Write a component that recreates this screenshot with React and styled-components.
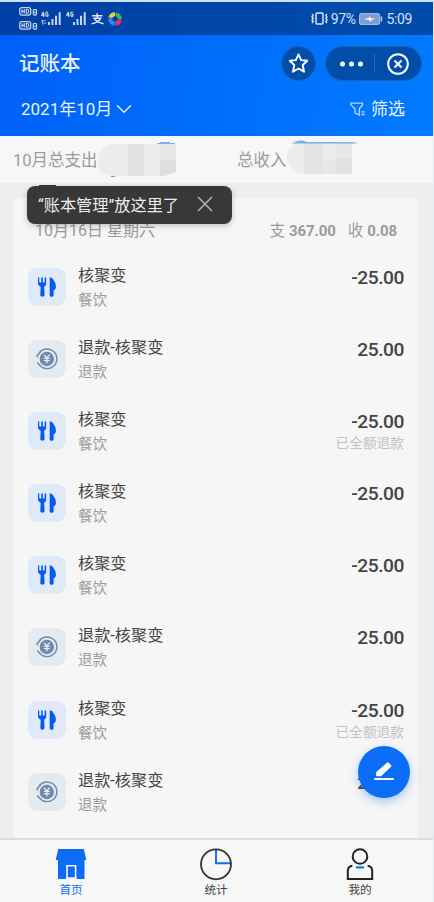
import styled, { createGlobalStyle } from 'styled-components'

const theme = {
  blue: '#0b6df5',
  ink: '#444444',
  grey: '#9b9b9b',
  panel: '#f6f6f6',
}

const GlobalStyle = createGlobalStyle`
  * {
    box-sizing: border-box;
  }
  body {
    margin: 0;
    font-family: Roboto, "Noto Sans CJK SC", sans-serif;
    background: ${theme.panel};
  }
  svg {
    display: block;
    flex: none;
  }
`

const Screen = styled.div`
  position: relative;
  display: flex;
  flex-direction: column;
  width: 434px;
  height: 902px;
  overflow: hidden;
  border-top: 2px solid #c9e5f2;
  border-right: 1px solid #e3eaf0;
  background: ${theme.panel};
`

const StatusBar = styled.div`
  display: flex;
  justify-content: space-between;
  flex: none;
  height: 33px;
  padding: 0 17px 0 19px;
  background: linear-gradient(90deg, #003fa6, #004cab);
`

const StatusGroup = styled.div`
  display: flex;
  align-items: center;
  color: #d5e3f7;
`

const StatusIcons = styled.div`
  display: flex;
  align-items: center;
  gap: 4px;
  margin-left: 3px;
`

const StatusText = styled.span`
  font-size: 14px;
  line-height: 20px;
  letter-spacing: -0.4px;
  margin: 0 ${props => props.$gap || '0'};
`

const Header = styled.header`
  flex: none;
  height: 101px;
  background: linear-gradient(100deg, #0060f8, #007bff);
  color: #e9f2ff;
`

const HeaderRow = styled.div`
  display: flex;
  align-items: center;
  justify-content: space-between;
  height: ${props => props.$height};
  padding: ${props => props.$pad};
`

const Title = styled.h1`
  margin: 0;
  font-size: 20.5px;
  font-weight: 500;
  line-height: 30px;
`

const Controls = styled.div`
  display: flex;
  gap: 9px;
`

const Pill = styled.div`
  display: flex;
  align-items: center;
  justify-content: ${props => props.$round ? 'center' : 'flex-start'};
  width: ${props => props.$round ? '35px' : '97px'};
  height: 35px;
  padding-left: ${props => props.$round ? '0' : '13px'};
  border-radius: 18px;
  border: 1px solid #1c63b8;
  background: #004eaa;
`

const PillDivider = styled.span`
  width: 1px;
  height: 19px;
  margin: 0 12px 0 10px;
  background: #2a69b8;
`

const HeaderLabel = styled.div`
  display: flex;
  align-items: center;
  gap: ${props => props.$gap};
  font-size: 17px;
  line-height: 24px;
`

const Summary = styled.div`
  display: flex;
  flex: none;
  height: 47px;
  padding: 3px 0 0 13px;
  background: #f7f7f7;
`

const SummaryItem = styled.div`
  display: flex;
  width: ${props => props.$width};
  font-size: 16.5px;
  line-height: 44px;
  color: ${theme.grey};
  white-space: nowrap;
`

const List = styled.main`
  flex: 1;
  min-height: 0;
  padding: 15px 15px 0 13px;
  background: #eeeeee;
  overflow: hidden;
`

const Card = styled.section`
  height: 660px;
  padding: 17px 14px 0 15px;
  border-radius: 6px 6px 0 0;
  background: ${theme.panel};
`

const DayHeader = styled.div`
  display: flex;
  align-items: center;
  height: 27px;
  padding: 0 7px;
  font-size: 16px;
  color: ${theme.grey};
  white-space: nowrap;
`

const DayTotals = styled.div`
  display: flex;
  gap: 12px;
  margin-left: auto;
`

const Total = styled.span`
  font-size: 15.5px;

  b {
    margin-left: 4px;
    font-size: 15px;
    font-weight: 700;
    letter-spacing: -0.1px;
  }
`

const Entries = styled.div`
  padding-top: 20px;
`

const Entry = styled.div`
  display: flex;
  height: 72.1px;
`

const Tile = styled.div`
  display: flex;
  align-items: center;
  justify-content: center;
  width: 38px;
  height: 38px;
  margin: 6px 12px 0 0;
  border-radius: 9px;
  background: ${props => props.$refund ? '#e5eaf1' : '#dfe9f8'};
`

const EntryColumn = styled.div`
  display: flex;
  flex-direction: column;
  align-items: ${props => props.$right ? 'flex-end' : 'flex-start'};
  margin-left: ${props => props.$right ? 'auto' : '0'};
  padding-top: 1px;
`

const Name = styled.span`
  font-size: 16.2px;
  line-height: 26px;
  color: ${theme.ink};
`

const Category = styled.span`
  font-size: 14.5px;
  line-height: 23px;
  color: ${theme.grey};
`

const Amount = styled.span`
  font-size: 19.2px;
  font-weight: 500;
  line-height: 29px;
  letter-spacing: -0.45px;
  color: ${theme.ink};
`

const Note = styled.span`
  font-size: 13.7px;
  line-height: 20px;
  margin-top: -3px;
  color: #c2c2c2;
`

const Tooltip = styled.div`
  position: absolute;
  left: 27px;
  top: 184px;
  display: flex;
  align-items: center;
  justify-content: space-between;
  width: 205px;
  height: 38px;
  padding: 0 19px 2px 11px;
  border-radius: 8px;
  background: #383838;
  box-shadow: 0 2px 6px rgba(0, 0, 0, 0.22);
  color: #eeeeee;
  font-size: 16.2px;
  white-space: nowrap;

  &::before {
    content: '';
    position: absolute;
    left: 12px;
    top: -1px;
    width: 17px;
    height: 2px;
    background: #383838;
  }
`

const EditButton = styled.button`
  position: absolute;
  left: 358px;
  top: 744px;
  display: flex;
  align-items: center;
  justify-content: center;
  width: 52px;
  height: 52px;
  padding: 0 0 3px;
  border: none;
  border-radius: 50%;
  background: ${theme.blue};
  box-shadow: 0 4px 10px rgba(11, 109, 245, 0.35);
`

const TabBar = styled.nav`
  display: grid;
  grid-template-columns: repeat(3, 1fr);
  flex: none;
  height: 64px;
  padding: 7px 1px 0 0;
  border-top: 2px solid #dcdcdc;
  background: #f7f7f7;
`

const Tab = styled.div`
  display: flex;
  flex-direction: column;
  align-items: center;
  padding-right: ${props => props.$active ? '2px' : '0'};
  font-size: 11.6px;
  line-height: 18px;
  color: ${props => props.$active ? theme.blue : theme.ink};
`

const HdIcon = () => (
  <svg width="19" height="23" viewBox="0 0 19 23">
    {[0, 14].map((y, i) => (
      <g key={y} fill="none" stroke="#c3d6f1">
        <rect x="0.7" y={y + 0.7} width="11" height="7.4" rx="2" strokeWidth="1.3" />
        <path d={`M3 ${y + 2.2}v4.4M5.3 ${y + 2.2}v4.4M3 ${y + 4.4}h2.3M7.3 ${y + 2.5}v3.8h0.8q1.7 0 1.7-1.9t-1.7-1.9z`} strokeWidth="1.1" />
        <rect x="14.3" y={y + 2.5} width="3.2" height="5.6" rx="0.8" strokeWidth="1.2" />
        <path d={i ? `M14.5 ${y + 5.2}h3` : `M15.9 ${y + 4}v2.8`} strokeWidth="1" />
      </g>
    ))}
  </svg>
)

const SignalIcon = ({ data }) => (
  <svg width="21" height="15" viewBox="0 0 21 15">
    <g fill="none" stroke="#d5e3f7" strokeWidth="1.1">
      <path d="M2.5 0.7L0.7 4.2H3.4M2.7 2v4M7 1.4Q4.8 0.2 4.8 3.2Q4.8 6 7 5V3.4H6" />
      {data && <path d="M1.8 9v4.5M0.6 10.4l1.2-1.4M4 9v1.2M4 11.5v1.5" strokeWidth="1" />}
    </g>
    <path d="M7 11h2v3h-2zM10.5 8h2v6h-2zM14 4.8h2v9.2h-2zM17.7 1.3h2v12.7h-2z" fill="#c3d6f1" />
  </svg>
)

const AlipayIcon = () => (
  <svg width="13" height="12" viewBox="0 0 13 12" fill="none" stroke="#e0ebfa" strokeWidth="1.4">
    <path d="M1 2.8h10.5M6.2 0.3v4.9M2.3 5.3h7.4C8.5 8.2 5.2 10 0.6 10.9M3.4 6.2C6 8.5 8.5 10 12.6 10.8" />
  </svg>
)

const BrowserIcon = () => (
  <svg width="14" height="14" viewBox="0 0 14 14" fill="none" strokeWidth="4">
    <path d="M2.3 5.6A4.9 4.9 0 0 1 7 2.2" stroke="#f4c83d" />
    <path d="M7.6 2.2A4.9 4.9 0 0 1 11.8 7.4" stroke="#36b86b" />
    <path d="M11.7 8A4.9 4.9 0 0 1 7.4 11.8" stroke="#e93455" />
    <path d="M6.8 11.8A4.9 4.9 0 0 1 2.3 6.2" stroke="#2a8cf0" />
  </svg>
)

const VibrateIcon = () => (
  <svg width="17" height="13" viewBox="0 0 17 13" fill="none" stroke="#d5e3f7">
    <rect x="5" y="1" width="7" height="11" rx="1" strokeWidth="1.5" />
    <path d="M1 2l1.2 1.5L1 5l1.2 1.5L1 8l1.2 1.5L1 11M16 2l-1.2 1.5L16 5l-1.2 1.5L16 8l-1.2 1.5L16 11" strokeWidth="1.4" />
  </svg>
)

const BatteryIcon = () => (
  <svg width="24" height="12" viewBox="0 0 24 12">
    <rect x="0.6" y="0.6" width="20" height="10.8" rx="1.5" fill="#7d9fd0" stroke="#a9c2e6" />
    <path d="M22.4 3.5v5" stroke="#c3d6f1" strokeWidth="1.5" />
    <path d="M5 6l5-1V3l2 2.2 4.5 0.5L12 7v2L10 6.9z" fill="#fff" />
  </svg>
)

const StarIcon = () => (
  <svg width="21" height="21" viewBox="0 0 21 21" fill="none" stroke="#fff" strokeWidth="1.9" strokeLinejoin="round">
    <path d="M10.5 1.4L13.1 7.1L19.3 7.8L14.7 12L16 18.7L10.5 15.5L5 18.7L6.3 12L1.7 7.8L7.9 7.1Z" />
  </svg>
)

const DotsIcon = () => (
  <svg width="25" height="6" viewBox="0 0 25 6" fill="#fff">
    <circle cx="3.5" cy="3" r="2.5" />
    <circle cx="12.5" cy="3" r="2.5" />
    <circle cx="21.5" cy="3" r="2.5" />
  </svg>
)

const CloseIcon = () => (
  <svg width="22" height="22" viewBox="0 0 22 22" fill="none" stroke="#fff">
    <circle cx="11" cy="11" r="9.8" strokeWidth="2" />
    <path d="M7.5 7.5l7 7M14.5 7.5l-7 7" strokeWidth="2.2" />
  </svg>
)

const ChevronIcon = () => (
  <svg width="16" height="10" viewBox="0 0 16 10" fill="none" stroke="#e9f2ff" strokeWidth="1.4">
    <path d="M1 1.2L8 8.3L15 1.2" />
  </svg>
)

const FilterIcon = () => (
  <svg width="16" height="15" viewBox="0 0 16 15" fill="none" stroke="#b9d7ff" strokeWidth="1.3">
    <path d="M1 1.2H12.5V3L9.3 6.7V13L5 11V6.7L1 3Z" />
    <path d="M11.3 9.8h3.5M11.3 12.5h3.5" />
  </svg>
)

const ExpenseBlur = () => (
  <svg width="80" height="38" viewBox="0 0 80 38">
    <path d="M12 5H78V33L66 37H14Q0 36 0 22Q0 8 12 5Z" fill="#ececec" />
    <path d="M30 5h16v32H30z" fill="#e2e2e2" />
    <path d="M46 5h16v16H46z" fill="#ebebeb" />
    <path d="M62 5h16v16H62z" fill="#e6e6e6" />
    <path d="M62 21h16v12L66 37H62z" fill="#dedede" />
    <path d="M59 4.5h18M62 3.5h10" stroke="#78b0ee" strokeWidth="1" />
    <path d="M13 37.5h4" stroke="#999" strokeWidth="1" />
  </svg>
)

const IncomeBlur = () => (
  <svg width="72" height="38" viewBox="0 0 72 38">
    <path d="M12 4H65V35H18Q0 33 0 18Q0 7 12 4Z" fill="#ececec" />
    <path d="M17 4h18v31H17z" fill="#e3e3e3" />
    <path d="M35 4h14v17H35z" fill="#ececec" />
    <path d="M35 21h14v14H35zM49 4h16v15H49z" fill="#e7e7e7" />
    <path d="M49 19h16v16H49z" fill="#e1e1e1" />
    <path d="M5 4.6Q12 -0.5 20 3H66L71 4.6Z" fill="#78b0ee" />
  </svg>
)

const FoodIcon = () => (
  <svg width="20" height="22" viewBox="0 0 20 22" fill="#075af0">
    <path d="M1 2.2Q1 1.2 1.6 1.2Q2.3 1.2 2.3 2.2V6.5H4.2V2Q4.2 1.2 5 1.2Q5.8 1.2 5.8 2V6.5H7.6V2.2Q7.6 1.2 8.4 1.2Q9.2 1.2 9.2 2.2V7.5Q9.2 9.8 7.1 10.7L7.6 19Q7.4 20.7 5.3 20.7Q3.3 20.7 3.3 19L3.7 10.7Q1 9.7 1 7.5Z" />
    <path d="M12.7 2Q12.7 1.2 13.7 1.4Q16.3 1.9 17 5Q18.9 6.5 18.9 10.5Q18.9 13.8 16.6 14.2V19.5Q16.5 20.7 14.7 20.7Q12.7 20.7 12.7 19.5Z" />
  </svg>
)

const RefundIcon = () => (
  <svg width="22" height="22" viewBox="0 0 22 22" fill="none" stroke="#7187ad">
    <path d="M3.2 5A9.8 9.8 0 1 1 3 16.3" strokeWidth="1.4" />
    <path d="M1.3 9.5V6.5M1.5 7.2L4.4 4M3.2 16.8L1.3 14.6" strokeWidth="1.5" />
    <circle cx="10.8" cy="11" r="7.2" fill="#7187ad" stroke="none" />
    <path d="M8 6.8L10.8 10L13.6 6.8M10.8 10V15.2M7.8 10.3h6M7.8 12.7h6" stroke="#e5eaf1" strokeWidth="1.3" />
  </svg>
)

const DismissIcon = () => (
  <svg width="16" height="16" viewBox="0 0 16 16" fill="none" stroke="#b5b5b5" strokeWidth="1.5">
    <path d="M1 1l14 14M15 1L1 15" />
  </svg>
)

const PenIcon = () => (
  <svg width="22" height="20" viewBox="0 0 22 20" fill="#fff">
    <path d="M3.3 11.1L14 1.8Q15 0.9 16 1.9L18 4.1Q18.8 5.1 17.8 6L8 15.3H4Q3.1 15.3 3.1 14.3Z" />
    <rect x="1" y="17" width="20" height="2.1" rx="1" />
  </svg>
)

const HomeIcon = () => (
  <svg width="32" height="34" viewBox="0 0 32 34">
    <path d="M3.2 2H28.8L31.3 13H29.5V32H3V13H0.7Z" fill={theme.blue} />
    <path d="M12 32V18.8H20.6V32" fill="none" stroke="#f7f7f7" strokeWidth="1.6" />
    <path d="M11.2 31.2h10.2" fill="none" stroke="#f7f7f7" strokeWidth="1.8" />
  </svg>
)

const StatsIcon = () => (
  <svg width="34" height="34" viewBox="0 0 34 34" fill="none">
    <path d="M17 2V16.2H32" stroke={theme.blue} strokeWidth="1.9" />
    <circle cx="17" cy="17.3" r="15" stroke="#333" strokeWidth="1.8" />
  </svg>
)

const UserIcon = () => (
  <svg width="28" height="34" viewBox="0 0 28 34" fill="none" stroke="#222" strokeWidth="2">
    <circle cx="14" cy="9.5" r="7.3" />
    <path d="M6.3 18.8Q1.8 19.5 1.8 24V32H26.2V24Q26.2 19.5 21.7 18.8" />
    <path d="M10 20.4h8" stroke={theme.blue} strokeWidth="2.2" />
  </svg>
)

const entries = [
  { name: '核聚变', amount: '-25.00' },
  { name: '退款-核聚变', amount: '25.00', refund: true },
  { name: '核聚变', amount: '-25.00', note: '已全额退款' },
  { name: '核聚变', amount: '-25.00' },
  { name: '核聚变', amount: '-25.00' },
  { name: '退款-核聚变', amount: '25.00', refund: true },
  { name: '核聚变', amount: '-25.00', note: '已全额退款' },
  { name: '退款-核聚变', amount: '25.00', refund: true },
]

export default function App() {
  return (
    <>
      <GlobalStyle />
      <Screen>
        <StatusBar>
          <StatusGroup>
            <HdIcon />
            <StatusIcons>
              <SignalIcon data />
              <SignalIcon />
              <AlipayIcon />
              <BrowserIcon />
            </StatusIcons>
          </StatusGroup>
          <StatusGroup>
            <VibrateIcon />
            <StatusText $gap="3px">97%</StatusText>
            <BatteryIcon />
            <StatusText $gap="4px">5:09</StatusText>
          </StatusGroup>
        </StatusBar>

        <Header>
          <HeaderRow $height="57px" $pad="0 11px 0 19px">
            <Title>记账本</Title>
            <Controls>
              <Pill $round><StarIcon /></Pill>
              <Pill>
                <DotsIcon />
                <PillDivider />
                <CloseIcon />
              </Pill>
            </Controls>
          </HeaderRow>
          <HeaderRow $height="34px" $pad="0 28px 0 21px">
            <HeaderLabel $gap="4px">2021年10月<ChevronIcon /></HeaderLabel>
            <HeaderLabel $gap="5px"><FilterIcon />筛选</HeaderLabel>
          </HeaderRow>
        </Header>

        <Summary>
          <SummaryItem $width="224px">10月总支出<ExpenseBlur /></SummaryItem>
          <SummaryItem>总收入<IncomeBlur /></SummaryItem>
        </Summary>

        <List>
          <Card>
            <DayHeader>
              10月16日 星期六
              <DayTotals>
                <Total>支<b>367.00</b></Total>
                <Total>收<b>0.08</b></Total>
              </DayTotals>
            </DayHeader>
            <Entries>
              {entries.map((entry, i) => (
                <Entry key={i}>
                  <Tile $refund={entry.refund}>
                    {entry.refund ? <RefundIcon /> : <FoodIcon />}
                  </Tile>
                  <EntryColumn>
                    <Name>{entry.name}</Name>
                    <Category>{entry.refund ? '退款' : '餐饮'}</Category>
                  </EntryColumn>
                  <EntryColumn $right>
                    <Amount>{entry.amount}</Amount>
                    {entry.note && <Note>{entry.note}</Note>}
                  </EntryColumn>
                </Entry>
              ))}
            </Entries>
          </Card>
        </List>

        <TabBar>
          <Tab $active><HomeIcon />首页</Tab>
          <Tab><StatsIcon />统计</Tab>
          <Tab><UserIcon />我的</Tab>
        </TabBar>

        <Tooltip>“账本管理”放这里了<DismissIcon /></Tooltip>
        <EditButton><PenIcon /></EditButton>
      </Screen>
    </>
  )
}
